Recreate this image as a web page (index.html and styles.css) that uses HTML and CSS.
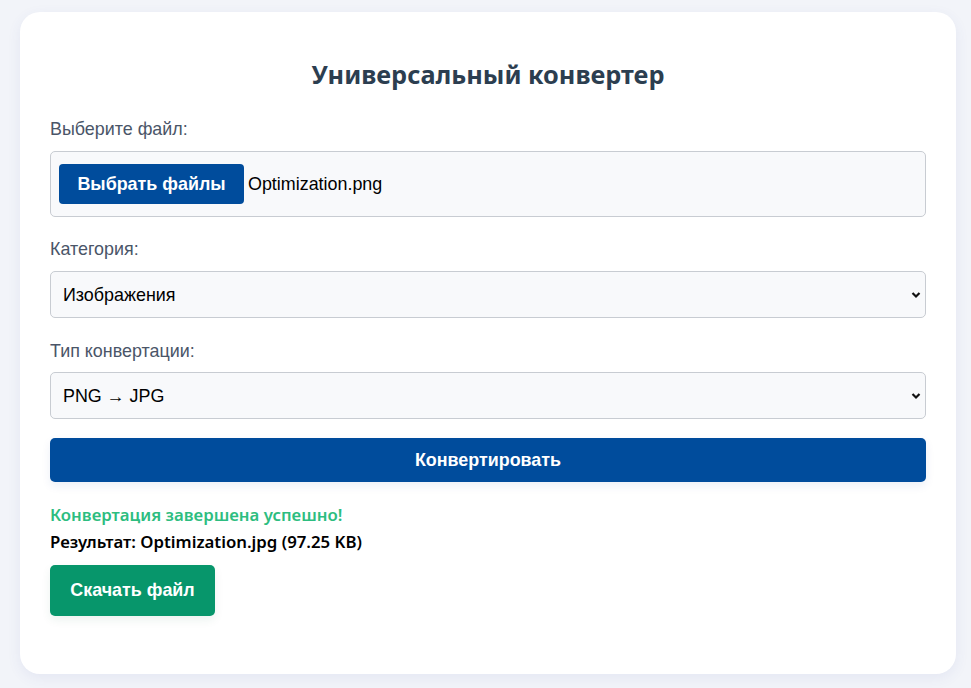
FILE: index.html
```html
<!DOCTYPE html>
<html lang="ru">
<head>
<meta charset="utf-8">
<title>Универсальный конвертер</title>
<link rel="stylesheet" href="styles.css">
</head>
<body>
<main class="card">
  <h2 class="title">Универсальный конвертер</h2>

  <label class="label">Выберите файл:</label>
  <div class="file-box">
    <span class="file-btn">Выбрать файлы</span>
    <span class="file-name">Optimization.png</span>
  </div>

  <label class="label">Категория:</label>
  <div class="select-wrap">
    <select class="select">
      <option>Изображения</option>
    </select>
    <svg class="chev" width="10" height="8" viewBox="0 0 10 8"><path d="M1.5 2 L5 5.5 L8.5 2" fill="none" stroke="#111" stroke-width="2.2"/></svg>
  </div>

  <label class="label">Тип конвертации:</label>
  <div class="select-wrap">
    <select class="select">
      <option>PNG → JPG</option>
    </select>
    <svg class="chev" width="10" height="8" viewBox="0 0 10 8"><path d="M1.5 2 L5 5.5 L8.5 2" fill="none" stroke="#111" stroke-width="2.2"/></svg>
  </div>

  <button class="convert">Конвертировать</button>

  <div class="result">
    <p class="success">Конвертация завершена успешно!</p>
    <p class="info">Результат: Optimization.jpg (97.25 KB)</p>
    <button class="download">Скачать файл</button>
  </div>
</main>
</body>
</html>
```

FILE: styles.css
```css
html, body {
  margin: 0;
  padding: 0;
}
body {
  background: #f2f4f9;
  padding: 12px 15px 14px 20px;
  font-family: "Liberation Sans", Arial, sans-serif;
}
.card {
  background: #ffffff;
  border-radius: 20px;
  box-shadow: 0 4px 14px rgba(60, 80, 160, 0.08);
  padding: 30px 30px 58px 30px;
  display: flex;
  flex-direction: column;
}
.title {
  margin: 16px 0 30px 0;
  text-align: center;
  font-family: "Noto Sans", "Open Sans", sans-serif;
  font-weight: 700;
  font-size: 25.3px;
  line-height: 32px;
  color: #2c3e50;
}
.label {
  display: block;
  font-size: 17.9px;
  line-height: 18px;
  color: #4a5568;
  margin-bottom: 13px;
}
.file-box {
  box-sizing: border-box;
  height: 66px;
  border: 1px solid #c8ccd2;
  border-radius: 5px;
  background: #f8f9fb;
  display: flex;
  align-items: center;
  padding: 0 8px;
  margin-bottom: 23px;
}
.file-btn {
  background: #004c9c;
  color: #fff;
  font-weight: 700;
  font-size: 17.9px;
  border-radius: 4px;
  height: 40px;
  width: 185px;
  display: flex;
  align-items: center;
  justify-content: center;
  margin-right: 4px;
}
.file-name {
  font-size: 17.9px;
  color: #000;
}
.select-wrap {
  position: relative;
  margin-bottom: 24px;
}
.select {
  display: block;
  width: 100%;
  height: 47px;
  box-sizing: border-box;
  appearance: none;
  -webkit-appearance: none;
  border: 1px solid #c8ccd2;
  border-radius: 5px;
  background: #f8f9fb;
  padding: 0 12px;
  font-family: "Liberation Sans", Arial, sans-serif;
  font-size: 17.9px;
  color: #000;
}
.chev {
  position: absolute;
  right: 5px;
  top: 20px;
  pointer-events: none;
}
.select-wrap + .label {
  margin-bottom: 12px;
}
.convert {
  margin-top: -5px;
  height: 44px;
  border: none;
  border-radius: 5px;
  background: #004c9c;
  color: #fff;
  font-family: "Liberation Sans", Arial, sans-serif;
  font-weight: 700;
  font-size: 17.9px;
  box-shadow: 0 4px 10px rgba(0, 60, 150, 0.08);
}
.result {
  margin-top: 22px;
  font-family: "Noto Sans", "Open Sans", sans-serif;
}
.success {
  margin: 0;
  color: #2dbd80;
  font-weight: 600;
  font-size: 16.8px;
  line-height: 22px;
}
.info {
  margin: 5px 0 12px 0;
  color: #000;
  font-weight: 600;
  font-size: 16.8px;
  line-height: 22px;
}
.download {
  height: 51px;
  width: 165px;
  border: none;
  border-radius: 5px;
  background: #07966b;
  color: #fff;
  font-family: "Liberation Sans", Arial, sans-serif;
  font-weight: 700;
  font-size: 17.9px;
  box-shadow: 0 4px 10px rgba(0, 100, 70, 0.08);
}
```
